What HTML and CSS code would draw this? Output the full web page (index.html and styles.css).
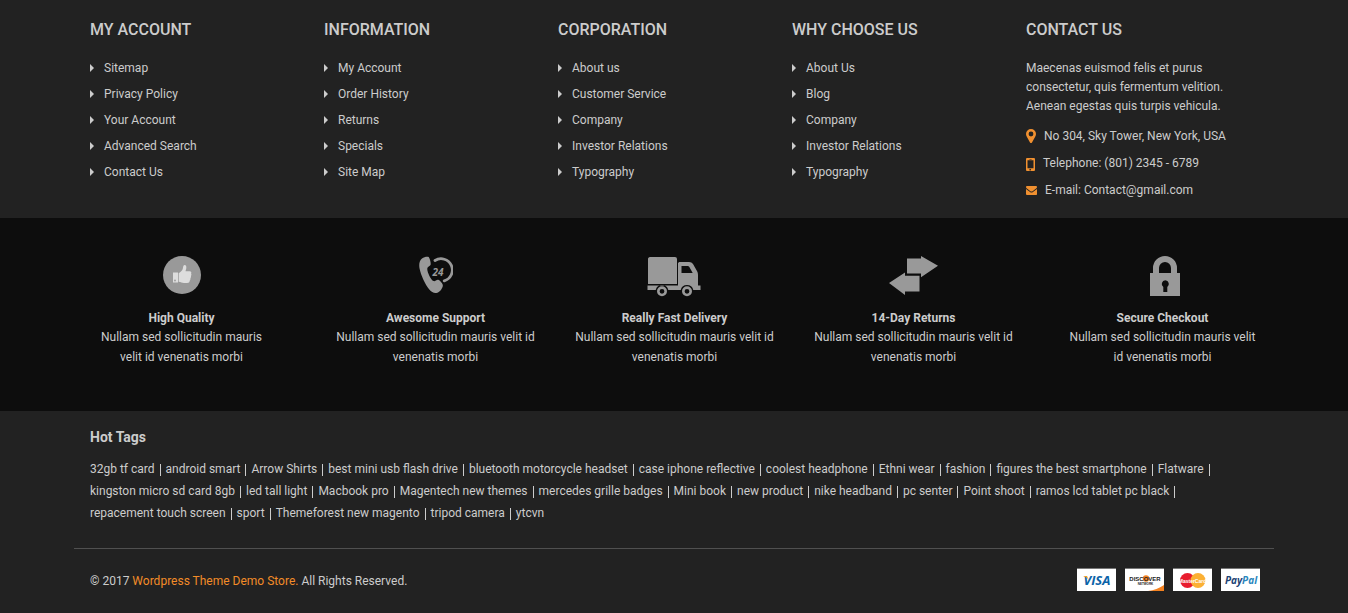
FILE: index.html
```html
<!DOCTYPE html>
<html lang="en">
<head>
<meta charset="utf-8">
<meta name="viewport" content="width=device-width, initial-scale=1">
<title>Wordpress Theme Demo Store</title>
<link rel="stylesheet" href="styles.css">
</head>
<body>
<footer>
  <div class="container links">
    <section>
      <h2>My Account</h2>
      <ul class="menu">
        <li><a href="#">Sitemap</a></li>
        <li><a href="#">Privacy Policy</a></li>
        <li><a href="#">Your Account</a></li>
        <li><a href="#">Advanced Search</a></li>
        <li><a href="#">Contact Us</a></li>
      </ul>
    </section>
    <section>
      <h2>Information</h2>
      <ul class="menu">
        <li><a href="#">My Account</a></li>
        <li><a href="#">Order History</a></li>
        <li><a href="#">Returns</a></li>
        <li><a href="#">Specials</a></li>
        <li><a href="#">Site Map</a></li>
      </ul>
    </section>
    <section>
      <h2>Corporation</h2>
      <ul class="menu">
        <li><a href="#">About us</a></li>
        <li><a href="#">Customer Service</a></li>
        <li><a href="#">Company</a></li>
        <li><a href="#">Investor Relations</a></li>
        <li><a href="#">Typography</a></li>
      </ul>
    </section>
    <section>
      <h2>Why Choose Us</h2>
      <ul class="menu">
        <li><a href="#">About Us</a></li>
        <li><a href="#">Blog</a></li>
        <li><a href="#">Company</a></li>
        <li><a href="#">Investor Relations</a></li>
        <li><a href="#">Typography</a></li>
      </ul>
    </section>
    <section>
      <h2>Contact Us</h2>
      <p class="about">Maecenas euismod felis et purus consectetur, quis fermentum velition. Aenean egestas quis turpis vehicula.</p>
      <ul class="contact">
        <li>
          <svg width="10" height="14" viewBox="0 0 10 14" aria-hidden="true"><path fill-rule="evenodd" d="M5 0a5 5 0 0 1 5 5c0 1-.3 1.700-.7 2.500L6 13.400c-.4.800-1.600.800-2 0L.7 7.500C.3 6.700 0 6 0 5a5 5 0 0 1 5-5zm0 2.600a2.400 2.400 0 1 0 0 4.800 2.400 2.400 0 0 0 0-4.800z"/></svg>
          <span>No 304, Sky Tower, New York, USA</span>
        </li>
        <li>
          <svg class="phone" width="9" height="13" viewBox="0 0 9 13" aria-hidden="true"><path fill-rule="evenodd" d="M1.300 0h6.400C8.500 0 9 .5 9 1.300v10.400c0 .8-.5 1.300-1.300 1.300H1.300C.5 13 0 12.500 0 11.700V1.300C0 .5.500 0 1.300 0zM1.500 2.300v7.900h6V2.300zM3.400.9v.6h2.200V.9zM4.500 10.900a.8.8 0 1 0 0 1.500.8.8 0 0 0 0-1.500z"/></svg>
          <span>Telephone: (801) 2345 - 6789</span>
        </li>
        <li>
          <svg width="11" height="9" viewBox="0 0 12 9" preserveAspectRatio="none" aria-hidden="true"><path d="M1 0h10c.6 0 1 .4 1 1 0 .7-.5 1.200-1 1.600L7.200 5.200c-.8.500-1.600.5-2.400 0L1 2.600C.5 2.200 0 1.700 0 1c0-.6.400-1 1-1zM0 3l4.400 3c1 .7 2.200.7 3.200 0L12 3v5c0 .6-.4 1-1 1H1c-.6 0-1-.4-1-1z"/></svg>
          <span>E-mail: Contact@gmail.com</span>
        </li>
      </ul>
    </section>
  </div>

  <div class="band">
    <div class="container services">
      <section>
        <svg width="38" height="38" viewBox="0 0 38 38" aria-hidden="true"><circle cx="19" cy="19" r="19"/><path class="light" fill-rule="evenodd" d="M10 16.500h5v10h-5zM12 23.600a.9.900 0 1 0 0 1.800.9.900 0 0 0 0-1.800zM15.700 17.200c2-1 3.400-2.500 4-4.200.5-1.300.3-3.700 1.800-3.900 1.600-.1 2 1.500 1.800 3-.1 1.300-.7 2.300-.7 3.200h4.100c1.500 0 2 1.100 1.400 2.200.5.900.3 1.800-.2 2.400.3.900 0 1.800-.5 2.300.2.900-.1 1.700-.6 2.200-.1 1.700-1 2.500-2.700 2.500H21c-2 0-3.300-1.100-5.300-1.200z"/></svg>
        <h3>High Quality</h3>
        <p>Nullam sed sollicitudin mauris velit id venenatis morbi</p>
      </section>
      <section>
        <svg width="34" height="38" viewBox="0 0 34 38" aria-hidden="true"><path d="M3 2.500C5 .8 8.800.2 9.700 1.100c1.200 1.300 2.500 6.400 1.800 8-.6 1.200-3 1.400-3.200 3.300-.4 3.200 3.600 11.300 6.200 12.600 1.500.700 3.100-1.600 4.700-1.200 1.700.5 4.300 3.500 4.600 5.300.3 2.300-2.600 6.600-5.400 7.600-2.900 1-5.500-.2-8.300-3.500C6.300 28.700 1.700 18.800.5 12.200-.2 7.900.4 4.700 3 2.500z"/><path class="stroke" stroke-width="2.800" stroke-linecap="round" d="M16 4.500A11.300 11.300 0 1 1 25.200 24.900"/><text x="13.500" y="20" class="hours">24</text></svg>
        <h3>Awesome Support</h3>
        <p>Nullam sed sollicitudin mauris velit id venenatis morbi</p>
      </section>
      <section>
        <svg width="56" height="41" viewBox="0 0 56 41" aria-hidden="true"><path d="M3 1h25a2 2 0 0 1 2 2v25H1V3c0-1 .7-2 2-2z"/><path fill-rule="evenodd" d="M31 7.500C31 6.500 32 6 33 6h9c2 0 3 .7 4 2l3.700 6.500c.8 1.400 1.300 2.500 1.300 4.500v10.500h2.500V34h-7.200a6.500 6.500 0 0 0-12.600 0H21.300a6.500 6.500 0 0 0-12.600 0H.5v-4.500H31zM34.500 10v7h11.200l-3.500-6.200c-.4-.6-.8-.8-1.500-.8z"/><path fill-rule="evenodd" d="M15 30.300a5 5 0 1 0 0 10 5 5 0 0 0 0-10zm0 2.600a2.400 2.400 0 1 1 0 4.800 2.400 2.400 0 0 1 0-4.800zM40 30.300a5 5 0 1 0 0 10 5 5 0 0 0 0-10zm0 2.600a2.400 2.400 0 1 1 0 4.800 2.400 2.400 0 0 1 0-4.800z"/></svg>
        <h3>Really Fast Delivery</h3>
        <p>Nullam sed sollicitudin mauris velit id venenatis morbi</p>
      </section>
      <section>
        <svg width="49" height="39" viewBox="0 0 49 39" aria-hidden="true"><path d="M18 2.500h14V0l17 9.800-17 11.400v-3.700H18zM0 27l16-10.500v3.300h14.500V35.500H16V39z"/></svg>
        <h3>14-Day Returns</h3>
        <p>Nullam sed sollicitudin mauris velit id venenatis morbi</p>
      </section>
      <section>
        <svg width="35" height="40" viewBox="-5 0 35 40" aria-hidden="true"><path fill-rule="evenodd" d="M0 17h3v-5a12 12 0 0 1 24 0v5h3v23H0zM9 17h12v-5a6 6 0 0 0-12 0zM15.300 24.300a3.700 3.700 0 0 0-2 6.700v5h4v-5a3.700 3.700 0 0 0-2-6.700z"/></svg>
        <h3>Secure Checkout</h3>
        <p>Nullam sed sollicitudin mauris velit id venenatis morbi</p>
      </section>
    </div>
  </div>

  <div class="container tags">
    <h2>Hot Tags</h2>
    <ul>
      <li><a href="#">32gb tf card</a></li>
      <li><a href="#">android smart</a></li>
      <li><a href="#">Arrow Shirts</a></li>
      <li><a href="#">best mini usb flash drive</a></li>
      <li><a href="#">bluetooth motorcycle headset</a></li>
      <li><a href="#">case iphone reflective</a></li>
      <li><a href="#">coolest headphone</a></li>
      <li><a href="#">Ethni wear</a></li>
      <li><a href="#">fashion</a></li>
      <li><a href="#">figures the best smartphone</a></li>
      <li><a href="#">Flatware</a></li>
      <li><a href="#">kingston micro sd card 8gb</a></li>
      <li><a href="#">led tall light</a></li>
      <li><a href="#">Macbook pro</a></li>
      <li><a href="#">Magentech new themes</a></li>
      <li><a href="#">mercedes grille badges</a></li>
      <li><a href="#">Mini book</a></li>
      <li><a href="#">new product</a></li>
      <li><a href="#">nike headband</a></li>
      <li><a href="#">pc senter</a></li>
      <li><a href="#">Point shoot</a></li>
      <li><a href="#">ramos lcd tablet pc black</a></li>
      <li><a href="#">repacement touch screen</a></li>
      <li><a href="#">sport</a></li>
      <li><a href="#">Themeforest new magento</a></li>
      <li><a href="#">tripod camera</a></li>
      <li><a href="#">ytcvn</a></li>
    </ul>
  </div>

  <div class="container legal">
    <p>© 2017 <a href="#">Wordpress Theme Demo Store.</a> All Rights Reserved.</p>
    <ul class="cards">
      <li><svg width="39" height="22" viewBox="0 0 39 22" role="img" aria-label="Visa"><text x="20" y="16" text-anchor="middle" class="visa">VISA</text><path fill="#f5a01d" d="M6 7h4l2 4.500C10.500 9 8.500 7.700 6 7z"/></svg></li>
      <li><svg width="39" height="22" viewBox="0 0 39 22" role="img" aria-label="Discover"><circle cx="21" cy="9.500" r="3.200" fill="#f58220"/><text x="20" y="12" text-anchor="middle" class="discover">DISCOVER</text><text x="20.500" y="15.500" text-anchor="middle" class="network">NETWORK</text><path fill="#f58220" d="M39 16v6H23c6-.8 11-2.800 16-6z"/></svg></li>
      <li><svg width="39" height="22" viewBox="0 0 39 22" role="img" aria-label="MasterCard"><circle cx="14.500" cy="11.500" r="7.500" fill="#e81c2e"/><circle cx="25" cy="11.500" r="7.500" fill="#fbb034"/><text x="19.500" y="13.500" text-anchor="middle" class="master">MasterCard</text></svg></li>
      <li><svg width="39" height="22" viewBox="0 0 39 22" role="img" aria-label="PayPal"><text x="20" y="15" text-anchor="middle" class="paypal">Pay<tspan>Pal</tspan></text></svg></li>
    </ul>
  </div>
</footer>
</body>
</html>
```
FILE: styles.css
```css
* {
  box-sizing: border-box;
  margin: 0;
  padding: 0;
}

body {
  background: #222;
  color: #ccc;
  font: 12px/20px Roboto, "Liberation Sans", sans-serif;
}

ul {
  list-style: none;
}

a {
  color: inherit;
  text-decoration: none;
}

a:hover {
  color: #f28c28;
}

.container {
  max-width: 1200px;
  margin: 0 auto;
  padding: 0 14px 0 16px;
}

.links {
  display: grid;
  grid-template-columns: repeat(5, 1fr);
  padding-top: 20px;
  padding-bottom: 15px;
}

.links h2 {
  margin-bottom: 15px;
  font-size: 16px;
  font-weight: 500;
  line-height: 20px;
  text-transform: uppercase;
}

.menu li {
  display: flex;
  align-items: center;
  gap: 10px;
  line-height: 26px;
}

.menu li::before {
  content: "";
  border: solid transparent;
  border-width: 4px 0 4px 4px;
  border-left-color: #ccc;
}

.about {
  max-width: 204px;
  padding-top: 4px;
  line-height: 19px;
}

.contact {
  display: grid;
  gap: 1px;
  padding-top: 7px;
}

.contact li {
  display: flex;
  align-items: center;
  gap: 8px;
  line-height: 26px;
}

.contact svg {
  fill: #f09030;
}

.contact .phone {
  margin-top: 3px;
}

.band {
  background: #0d0d0d;
}

.services {
  display: grid;
  grid-template-columns: 226fr 239fr 239fr 239fr 227fr;
  padding-top: 38px;
  padding-bottom: 44px;
  text-align: center;
}

.services section {
  display: flex;
  flex-direction: column;
  align-items: center;
  min-height: 111px;
  padding: 0 18px;
}

.services section:first-child {
  padding: 0 43px 0 0;
}

.services section:last-child {
  padding: 0 0 0 32px;
}

.services svg {
  flex: none;
  margin-bottom: auto;
  fill: #999;
}

.services .light {
  fill: #ddd;
}

.services .stroke {
  fill: none;
  stroke: #999;
}

.hours {
  font: italic bold 10px "Open Sans", sans-serif;
}

.services h3 {
  font-size: 12px;
  font-weight: 700;
  line-height: 17px;
}

.tags {
  padding-top: 16px;
  padding-bottom: 24px;
}

.tags h2 {
  margin-bottom: 11px;
  font-size: 14px;
  font-weight: 700;
  line-height: 20px;
}

.tags ul {
  display: flex;
  flex-wrap: wrap;
}

.tags li {
  display: flex;
  align-items: center;
  line-height: 22px;
}

.tags li:not(:last-child)::after {
  content: "";
  width: 1px;
  height: 12px;
  margin: 2px 5px 0;
  background: #ccc;
}

.legal {
  display: flex;
  align-items: flex-end;
  justify-content: space-between;
  padding-top: 19px;
  padding-bottom: 22px;
  border-top: 1px solid #505050;
}

.legal a {
  color: #f28c28;
}

.cards {
  display: flex;
  gap: 9px;
}

.cards li {
  border-top: 1px solid #777;
  background: #fff;
}

.cards svg {
  display: block;
}

.visa {
  fill: #0b63a8;
  font: italic bold 13px "Open Sans", sans-serif;
}

.discover {
  fill: #222;
  font: bold 6px "Liberation Sans", sans-serif;
}

.network {
  fill: #222;
  font: bold 3px "Liberation Sans", sans-serif;
}

.master {
  fill: #fff;
  font: bold 5px "Liberation Sans", sans-serif;
}

.paypal {
  fill: #1d4374;
  font: italic bold 10px "Open Sans", sans-serif;
}

.paypal tspan {
  fill: #2a86bd;
}
```
